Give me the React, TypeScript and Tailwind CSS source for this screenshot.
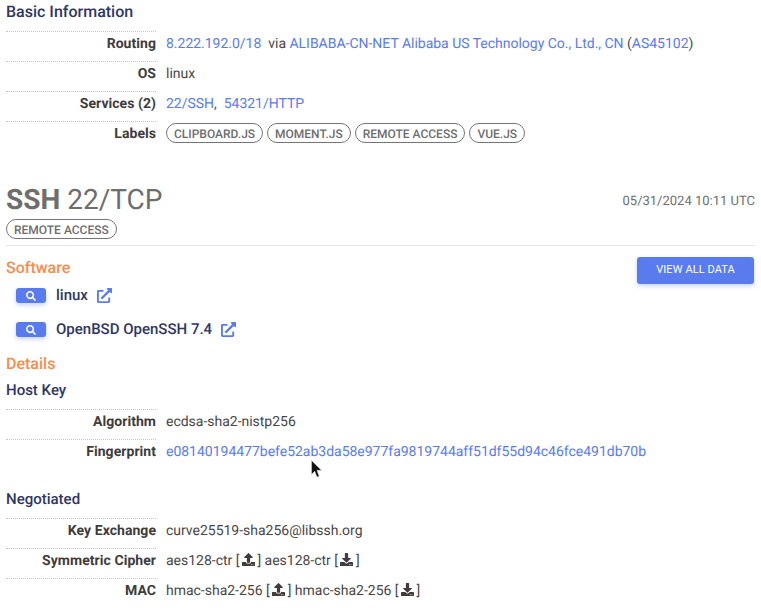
import type { ReactNode } from 'react'
import { FaSearch, FaExternalLinkAlt, FaUpload, FaDownload } from 'react-icons/fa'

function Row({ label, children }: { label: string; children: ReactNode }) {
  return (
    <div className="flex h-[30px]">
      <div className="w-[150px] shrink-0 border-t border-dotted border-[#c4c4c4] pt-[1px] text-right font-bold leading-[22px] tracking-[0.05px] text-[#403c3c]">
        {label}
      </div>
      <div className="ml-[10px] whitespace-nowrap pt-[2px] leading-[22px] tracking-[-0.015px]">{children}</div>
    </div>
  )
}

function Link({ children }: { children: ReactNode }) {
  return <a className="text-[#5a7bee]">{children}</a>
}

function Chip({ children }: { children: ReactNode }) {
  return (
    <span className="inline-flex h-[20px] items-center rounded-full border border-[#757575] px-[7px] pt-[1px] text-[12px] font-medium tracking-normal text-[#6e6e6e]">
      {children}
    </span>
  )
}

function SoftwareRow({ name }: { name: string }) {
  return (
    <div className="flex h-[34px] items-center pl-[10px]">
      <span className="flex h-[15px] w-[30px] items-center justify-center rounded-[3px] bg-[#5a7bee] shadow-[0_2px_4px_rgba(90,123,238,0.35)]">
        <FaSearch className="text-[10px] text-white" />
      </span>
      <span className="ml-[10px] text-[15px] font-medium text-[#2f3664]">{name}</span>
      <FaExternalLinkAlt className="ml-[9px] text-[15px] text-[#5a7bee]" />
    </div>
  )
}

function Dir({ up }: { up?: boolean }) {
  return (
    <>
      [<span className="mx-[2.5px] inline-block align-[-1px] text-[13px] text-[#403c3c]">{up ? <FaUpload /> : <FaDownload />}</span>]
    </>
  )
}

export default function App() {
  return (
    <div className="relative h-[614px] w-[761px] overflow-hidden bg-white font-['Roboto',sans-serif] text-[14px] text-[#4a4646] [text-rendering:geometricPrecision]">
      <div className="px-[6px]">
        <h3 className="h-[31px] pt-[1px] text-[16px] font-medium leading-[22px] text-[#2f3664]">Basic Information</h3>
        <Row label="Routing">
          <Link>8.222.192.0/18</Link>&nbsp; via <Link>ALIBABA-CN-NET Alibaba US Technology Co., Ltd., CN</Link> (<Link>AS45102</Link>)
        </Row>
        <Row label="OS">linux</Row>
        <Row label="Services (2)">
          <Link>22/SSH</Link>,&nbsp; <Link>54321/HTTP</Link>
        </Row>
        <Row label="Labels">
          <div className="flex gap-[4px]">
            <Chip>CLIPBOARD.JS</Chip>
            <Chip>MOMENT.JS</Chip>
            <Chip>REMOTE ACCESS</Chip>
            <Chip>VUE.JS</Chip>
          </div>
        </Row>

        <div className="mt-[32px] flex h-[34px] justify-between">
          <div className="text-[28px] leading-[34px] text-[#6e6e6e]">
            <span className="font-bold">SSH</span> 22/TCP
          </div>
          <div className="pt-[9px] text-[13px] text-[#6e6e6e]">05/31/2024 10:11 UTC</div>
        </div>
        <div className="mt-[2px] border-b border-[#e8e8e8] pb-[4px]">
          <Chip>REMOTE ACCESS</Chip>
        </div>

        <div className="flex items-start justify-between">
          <div>
            <h4 className="mb-[1px] mt-[12px] text-[16px] font-medium leading-[20px] text-[#f78c4f]">Software</h4>
            <SoftwareRow name="linux" />
            <SoftwareRow name="OpenBSD OpenSSH 7.4" />
          </div>
          <button className="mr-[1px] mt-[11px] h-[27px] w-[117px] rounded-[3px] bg-[#5a7bee] text-[11px] tracking-[0.1px] text-white shadow-[0_2px_4px_rgba(90,123,238,0.35)]">
            VIEW ALL DATA
          </button>
        </div>

        <h4 className="mt-[7px] text-[16px] font-medium leading-[20px] text-[#f78c4f]">Details</h4>
        <h3 className="mt-[6px] h-[29px] text-[15px] font-medium leading-[20px] text-[#2f3664]">Host Key</h3>
        <Row label="Algorithm">ecdsa-sha2-nistp256</Row>
        <Row label="Fingerprint">
          <Link>e08140194477befe52ab3da58e977fa9819744aff51df55d94c46fce491db70b</Link>
        </Row>

        <h3 className="mt-[20px] h-[29px] text-[15px] font-medium leading-[20px] text-[#2f3664]">Negotiated</h3>
        <Row label="Key Exchange">curve25519-sha256@libssh.org</Row>
        <Row label="Symmetric Cipher">
          aes128-ctr <Dir up /> aes128-ctr <Dir />
        </Row>
        <Row label="MAC">
          hmac-sha2-256 <Dir up /> hmac-sha2-256 <Dir />
        </Row>
      </div>

      {/* mouse pointer from the capture */}
      <svg className="absolute left-[311px] top-[460px]" width="11" height="18" viewBox="0 0 12 20">
        <path d="M0.5 0.5 V16 L4 12.5 L6.5 19 L9 18 L6.5 11.5 H11.5 Z" fill="#111" stroke="#ddd" strokeWidth="0.6" />
      </svg>
    </div>
  )
}
